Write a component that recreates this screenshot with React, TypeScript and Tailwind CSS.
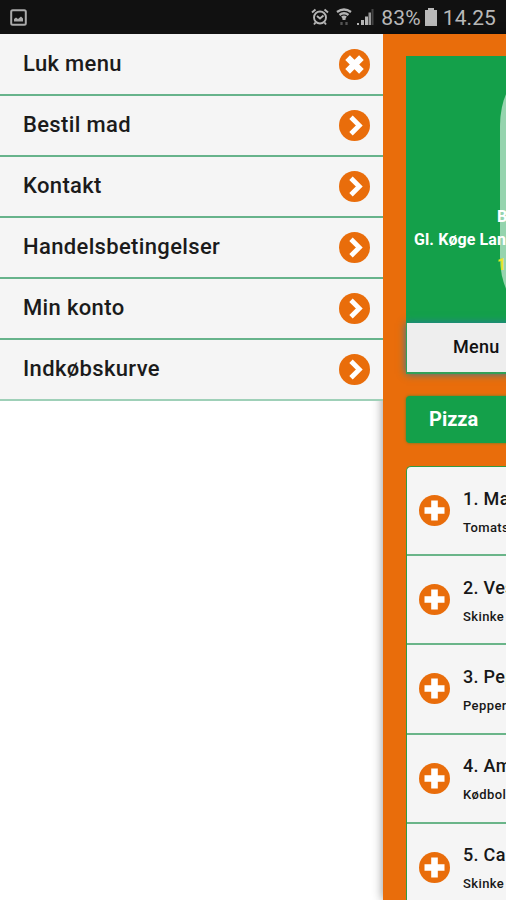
import React from 'react';

const menuItems = ['Luk menu', 'Bestil mad', 'Kontakt', 'Handelsbetingelser', 'Min konto', 'Indkøbskurve'];

const pizzas = [
  { name: '1. Ma', topping: 'Tomats' },
  { name: '2. Ves', topping: 'Skinke' },
  { name: '3. Pep', topping: 'Pepper' },
  { name: '4. Am', topping: 'Kødbol' },
  { name: '5. Cap', topping: 'Skinke' },
];

const shapes = {
  close: 'M8.6 8.6 L22.4 22.4 M22.4 8.6 L8.6 22.4',
  next: 'M12 7.2 L20.3 15.5 L12 23.8',
  plus: 'M5.5 15.5 H25.5 M15.5 5.5 V25.5',
};

const CircleIcon = ({ shape }: { shape: keyof typeof shapes }) => (
  <svg viewBox="0 0 31 31" className="w-[31px] h-[31px] shrink-0">
    <circle cx="15.5" cy="15.5" r="15.5" fill="#e96d0b" />
    <path d={shapes[shape]} fill="none" stroke="#fff" strokeWidth={shape === 'next' ? 4.8 : 6.6} />
  </svg>
);

const StatusBar = () => (
  <header className="h-[34px] shrink-0 bg-[#111] flex items-center justify-between px-[10px] text-[#b9b9b9]">
    <svg viewBox="0 0 17 17" className="w-[17px] h-[17px]">
      <rect x="1.2" y="1.2" width="14.6" height="14.6" rx="1.5" fill="none" stroke="#aaa" strokeWidth="2" />
      <path d="M4 12.5 V10 L6 8.5 L8 10 L11 7.5 L13 9.5 V12.5 Z" fill="#aaa" />
    </svg>
    <div className="flex items-center">
      <svg viewBox="0 0 18 18" className="w-[18px] h-[18px] mr-[7px]" fill="none" stroke="#b5b5b5" strokeWidth="1.9">
        <circle cx="9" cy="9.5" r="6" />
        <path d="M1 4.5 L4.5 1.5 M17 4.5 L13.5 1.5 M6 8 L9 10.5 L12.5 7.5 M4.5 14.5 L3 16.5 M13.5 14.5 L15 16.5" />
      </svg>
      <svg viewBox="0 0 16 18" className="w-[16px] h-[18px] mr-[5px]" fill="none" stroke="#b5b5b5" strokeWidth="2.3">
        <path d="M1 4 Q8 -1 15 4 M3.5 7 Q8 3.5 12.5 7 M5.8 9.5 Q8 8 10.2 9.5" />
        <path d="M8 9 V12" strokeWidth="3" />
        <path d="M5.5 14 V17 M10.5 14 V17" stroke="#555" />
      </svg>
      <svg viewBox="0 0 17 18" className="w-[17px] h-[18px] mr-[7px]">
        <path d="M0 15 h2 v2 h-2z M4 12 h3 v5 h-3z M8 8.5 h3 v8.5 h-3z" fill="#b5b5b5" />
        <path d="M11.5 4.5 h2.5 v12.5 h-2.5z" fill="#999" />
        <path d="M14.5 1 h2 v16 h-2z" fill="#444" />
      </svg>
      <span className="text-[21px] leading-none pt-[3px] tracking-[0.2px]">83%</span>
      <svg viewBox="0 0 12 18" className="w-[12px] h-[18px] ml-[4px] mr-[6px]">
        <path d="M3 0 H9 V2 H12 V18 H0 V2 H3 Z" fill="#b9b9b9" />
      </svg>
      <span className="text-[21px] leading-none pt-[3px] tracking-[0.1px]">14.25</span>
    </div>
  </header>
);

const SideMenu = () => (
  <nav className="relative w-[383px] shrink-0 z-10">
    <div className="bg-[#f5f5f5] pt-px">
      {menuItems.map((item, i) => (
        <div
          key={item}
          className="h-[61px] flex items-center justify-between pl-[23px] pr-[13px] border-b-2 border-[#67b38b] last:border-[#9fd0b8]"
        >
          <span className="text-[22px] font-medium leading-none tracking-[0.35px] text-[#1b1b1b] pb-px">{item}</span>
          <CircleIcon shape={i === 0 ? 'close' : 'next'} />
        </div>
      ))}
    </div>
  </nav>
);

const RestaurantHeader = () => (
  <div className="relative h-[267px] bg-[#14a04a] overflow-hidden">
    <div className="absolute left-[94px] top-[22px] w-[240px] h-[227px] rounded-[24px/48px] bg-white/55" />
    <div className="relative pt-[151px] pl-[8px] text-[16px] font-bold text-white whitespace-nowrap">
      <p className="pl-[83px] leading-[20px]">B</p>
      <p className="leading-[26px] tracking-[0.1px]">Gl. Køge Lan</p>
      <p className="pl-[83px] leading-[24px] text-[#e8e52b]">1</p>
    </div>
  </div>
);

const RestaurantPage = () => (
  <main className="w-[430px] shrink-0 bg-[#e96d0b] pl-[23px] pt-[22px] shadow-[0_0_10px_rgba(0,0,0,0.45)]">
    <RestaurantHeader />
    <div className="relative h-[51px] pl-[46px] flex items-center bg-[#eee] border-l border-b-2 border-[#32a057] shadow-[0_0_8px_#2878a0]">
      <span className="text-[18px] font-medium tracking-[0.3px] text-[#111] pb-[3px]">Menu</span>
    </div>
    <div className="mt-[22px] h-[47px] pl-[23px] flex items-center rounded-[4px] bg-[#14a04a] shadow-[0_0_3px_#4f802b]">
      <span className="text-[20px] font-bold text-white pb-[2px]">Pizza</span>
    </div>
    <div className="mt-[23px] rounded-tl-[5px] border-l border-t border-[#329b43] bg-[#f5f5f5]">
      {pizzas.map((pizza) => (
        <div key={pizza.name} className="h-[89.2px] pl-[12px] flex items-center border-b-2 border-[#6ab589]">
          <CircleIcon shape="plus" />
          <div className="pl-[13px] pt-[6px] text-[#171717] whitespace-nowrap">
            <p className="text-[18px] font-medium leading-[28px] tracking-[0.3px]">{pizza.name}</p>
            <p className="text-[13px] font-medium leading-[30px] tracking-[0.4px]">{pizza.topping}</p>
          </div>
        </div>
      ))}
    </div>
  </main>
);

export default function App() {
  return (
    <div className="w-[506px] h-[900px] flex flex-col overflow-hidden bg-white font-['Roboto',sans-serif]">
      <StatusBar />
      <div className="flex flex-1 min-h-0">
        <SideMenu />
        <RestaurantPage />
      </div>
    </div>
  );
}
